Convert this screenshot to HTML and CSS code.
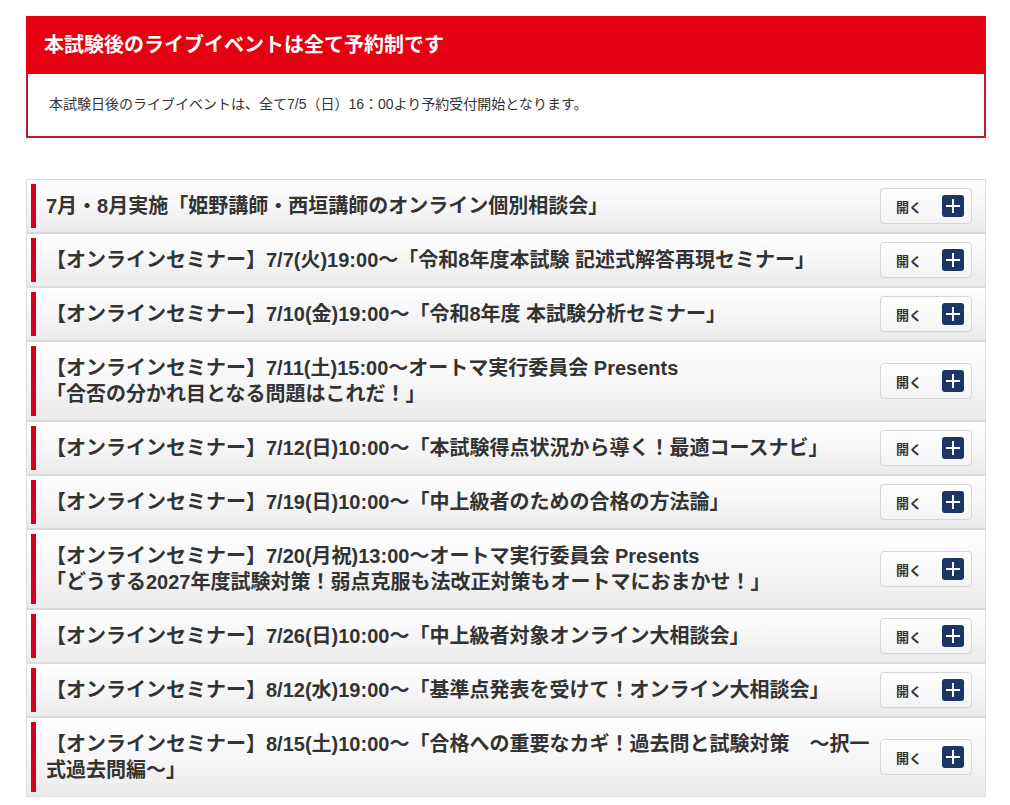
FILE: index.html
```html
<!DOCTYPE html>
<html lang="ja">
<head>
    <meta charset="UTF-8">
    <meta name="viewport" content="width=device-width, initial-scale=1.0">
    <title>本試験後のライブイベント</title>
    <link rel="stylesheet" href="styles.css">
</head>
<body>
    <div class="notice">
        <h2 class="notice-title">本試験後のライブイベントは全て予約制です</h2>
        <p class="notice-body">本試験日後のライブイベントは、全て7/5（日）16：00より予約受付開始となります。</p>
    </div>

    <ul class="events">
        <li class="event">
            <div class="event-head">
                <h3 class="event-title">7月・8月実施「姫野講師・西垣講師のオンライン個別相談会」</h3>
                <button class="toggle">開く<span class="plus"></span></button>
            </div>
        </li>
        <li class="event">
            <div class="event-head">
                <h3 class="event-title">【オンラインセミナー】7/7(火)19:00～「令和8年度本試験 記述式解答再現セミナー」</h3>
                <button class="toggle">開く<span class="plus"></span></button>
            </div>
        </li>
        <li class="event">
            <div class="event-head">
                <h3 class="event-title">【オンラインセミナー】7/10(金)19:00～「令和8年度 本試験分析セミナー」</h3>
                <button class="toggle">開く<span class="plus"></span></button>
            </div>
        </li>
        <li class="event">
            <div class="event-head">
                <h3 class="event-title">【オンラインセミナー】7/11(土)15:00～オートマ実行委員会 Presents<br>「合否の分かれ目となる問題はこれだ！」</h3>
                <button class="toggle">開く<span class="plus"></span></button>
            </div>
        </li>
        <li class="event">
            <div class="event-head">
                <h3 class="event-title">【オンラインセミナー】7/12(日)10:00～「本試験得点状況から導く！最適コースナビ」</h3>
                <button class="toggle">開く<span class="plus"></span></button>
            </div>
        </li>
        <li class="event">
            <div class="event-head">
                <h3 class="event-title">【オンラインセミナー】7/19(日)10:00～「中上級者のための合格の方法論」</h3>
                <button class="toggle">開く<span class="plus"></span></button>
            </div>
        </li>
        <li class="event">
            <div class="event-head">
                <h3 class="event-title">【オンラインセミナー】7/20(月祝)13:00～オートマ実行委員会 Presents<br>「どうする2027年度試験対策！弱点克服も法改正対策もオートマにおまかせ！」</h3>
                <button class="toggle">開く<span class="plus"></span></button>
            </div>
        </li>
        <li class="event">
            <div class="event-head">
                <h3 class="event-title">【オンラインセミナー】7/26(日)10:00～「中上級者対象オンライン大相談会」</h3>
                <button class="toggle">開く<span class="plus"></span></button>
            </div>
        </li>
        <li class="event">
            <div class="event-head">
                <h3 class="event-title">【オンラインセミナー】8/12(水)19:00～「基準点発表を受けて！オンライン大相談会」</h3>
                <button class="toggle">開く<span class="plus"></span></button>
            </div>
        </li>
        <li class="event">
            <div class="event-head">
                <h3 class="event-title">【オンラインセミナー】8/15(土)10:00～「合格への重要なカギ！過去問と試験対策　～択一式過去問編～」</h3>
                <button class="toggle">開く<span class="plus"></span></button>
            </div>
        </li>
    </ul>
</body>
</html>
```

FILE: styles.css
```css
/* Base */
body {
    margin: 0;
    padding: 16px 24px 20px 26px;
    font-family: "Liberation Sans", "Noto Sans CJK JP", sans-serif;
    color: #333333;
    background-color: #FFFFFF;
}

/* Notice box */
.notice {
    border: 2px solid #C21A2C;
    border-top: none;
    background-color: #FFFFFF;
}

.notice-title {
    margin: 0 -2px;
    padding: 0 18px;
    height: 58px;
    background-color: #E50012;
    color: #FFFFFF;
    font-size: 20px;
    font-weight: bold;
    line-height: 58px;
}

.notice-body {
    margin: 0;
    padding: 20px 21px 22px;
    font-size: 14px;
    line-height: 20px;
    color: #333333;
}

/* Event accordion */
.events {
    list-style: none;
    margin: 41px 0 0;
    padding: 0;
    border: 1px solid #DDDDDD;
}

.event {
    padding: 4px 0 4px 4px;
    background: linear-gradient(to bottom, #FFFFFF 0%, #F7F7F7 45%, #EBEBEB 100%);
}

.event + .event {
    border-top: 2px solid #DADADA;
}

.event-head {
    display: flex;
    align-items: center;
    gap: 10px;
    min-height: 44px;
    border-left: 5px solid #D5001C;
    padding: 0 13px 0 10px;
}

.event-title {
    flex: 1;
    margin: 0;
    padding: 9px 0;
    font-size: 20px;
    font-weight: bold;
    line-height: 26px;
    color: #333333;
}

/* Open button */
.toggle {
    flex: none;
    display: flex;
    align-items: center;
    justify-content: space-between;
    width: 92px;
    height: 36px;
    padding: 0 7px 0 15px;
    border: 1px solid #D6D6D6;
    border-radius: 4px;
    background: linear-gradient(to bottom, #FFFFFF, #F4F4F4);
    font-family: inherit;
    font-size: 13px;
    font-weight: bold;
    color: #333333;
    cursor: pointer;
}

.plus {
    position: relative;
    width: 22px;
    height: 22px;
    border-radius: 3px;
    background-color: #1B3565;
}

.plus::before,
.plus::after {
    content: "";
    position: absolute;
    left: 50%;
    top: 50%;
    background-color: #FFFFFF;
    transform: translate(-50%, -50%);
}

.plus::before {
    width: 14px;
    height: 2px;
}

.plus::after {
    width: 2px;
    height: 14px;
}
```
